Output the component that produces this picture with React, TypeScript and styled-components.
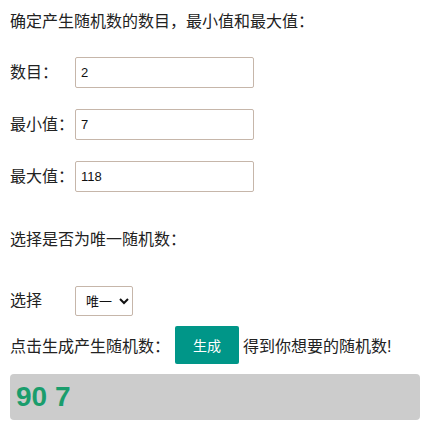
import React, { useState } from 'react'
import styled, { createGlobalStyle } from 'styled-components'

const GlobalStyle = createGlobalStyle`
  body {
    margin: 0;
    background: #fff;
    font-family: "Liberation Sans", "Noto Sans CJK SC", sans-serif;
    color: #222;
  }
`

const Page = styled.div`
  display: flex;
  flex-direction: column;
  padding: 10px 4px 0 10px;
  font-size: 16px;
`

const Heading = styled.p<{ $top?: number }>`
  margin: ${p => p.$top ?? 0}px 0 0;
  line-height: 24px;
  height: 24px;
  white-space: nowrap;
`

const Row = styled.div<{ $top: number }>`
  display: flex;
  align-items: center;
  margin-top: ${p => p.$top}px;
  white-space: nowrap;
`

const Label = styled.span`
  width: 65px;
  flex: none;
  line-height: 24px;
`

const TextInput = styled.input`
  box-sizing: border-box;
  width: 179px;
  height: 31px;
  padding: 0 5px;
  border: 1px solid #c6b6aa;
  border-radius: 2px;
  font-family: "Liberation Sans", "Noto Sans CJK SC", sans-serif;
  font-size: 13px;
  color: #111;
  outline: none;
`

const Select = styled.select`
  box-sizing: border-box;
  width: 58px;
  height: 30px;
  padding: 0 3px 0 6px;
  border: 1px solid #c6b6aa;
  border-radius: 2px;
  background: #fff;
  font-family: "Liberation Sans", "Noto Sans CJK SC", sans-serif;
  font-size: 13px;
  color: #111;
`

const Button = styled.button`
  width: 64px;
  height: 38px;
  margin: 0 4px 0 5px;
  border: none;
  border-radius: 2px;
  background: #009688;
  color: #fff;
  font-family: "Liberation Sans", "Noto Sans CJK SC", sans-serif;
  font-size: 14px;
  cursor: pointer;
`

const Result = styled.div`
  box-sizing: border-box;
  margin-top: 10px;
  height: 46px;
  padding: 0 6px;
  display: flex;
  align-items: center;
  background: #cccccc;
  border-radius: 4px;
  color: #1a9d6c;
  font-weight: bold;
  font-size: 28px;
`

export default function App() {
  const [count, setCount] = useState('2')
  const [min, setMin] = useState('7')
  const [max, setMax] = useState('118')
  const [unique, setUnique] = useState('1')
  const [result, setResult] = useState('90 7')

  const generate = () => {
    const n = parseInt(count) || 0
    const lo = parseInt(min) || 0
    const hi = parseInt(max) || 0
    const out: number[] = []
    let guard = 0
    while (out.length < n && guard < 10000) {
      guard++
      const v = lo + Math.floor(Math.random() * (hi - lo + 1))
      if (unique === '1' && out.includes(v)) continue
      out.push(v)
    }
    setResult(out.join(' '))
  }

  return (
    <Page>
      <GlobalStyle />
      <Heading>确定产生随机数的数目，最小值和最大值：</Heading>
      <Row $top={23}>
        <Label>数目：</Label>
        <TextInput value={count} onChange={e => setCount(e.target.value)} />
      </Row>
      <Row $top={21}>
        <Label>最小值：</Label>
        <TextInput value={min} onChange={e => setMin(e.target.value)} />
      </Row>
      <Row $top={21}>
        <Label>最大值：</Label>
        <TextInput value={max} onChange={e => setMax(e.target.value)} />
      </Row>
      <Heading $top={36}>选择是否为唯一随机数：</Heading>
      <Row $top={34}>
        <Label>选择</Label>
        <Select value={unique} onChange={e => setUnique(e.target.value)}>
          <option value="1">唯一</option>
          <option value="0">可重复</option>
        </Select>
      </Row>
      <Row $top={10}>
        <span>点击生成产生随机数：</span>
        <Button onClick={generate}>生成</Button>
        <span>得到你想要的随机数!</span>
      </Row>
      <Result>{result}</Result>
    </Page>
  )
}
